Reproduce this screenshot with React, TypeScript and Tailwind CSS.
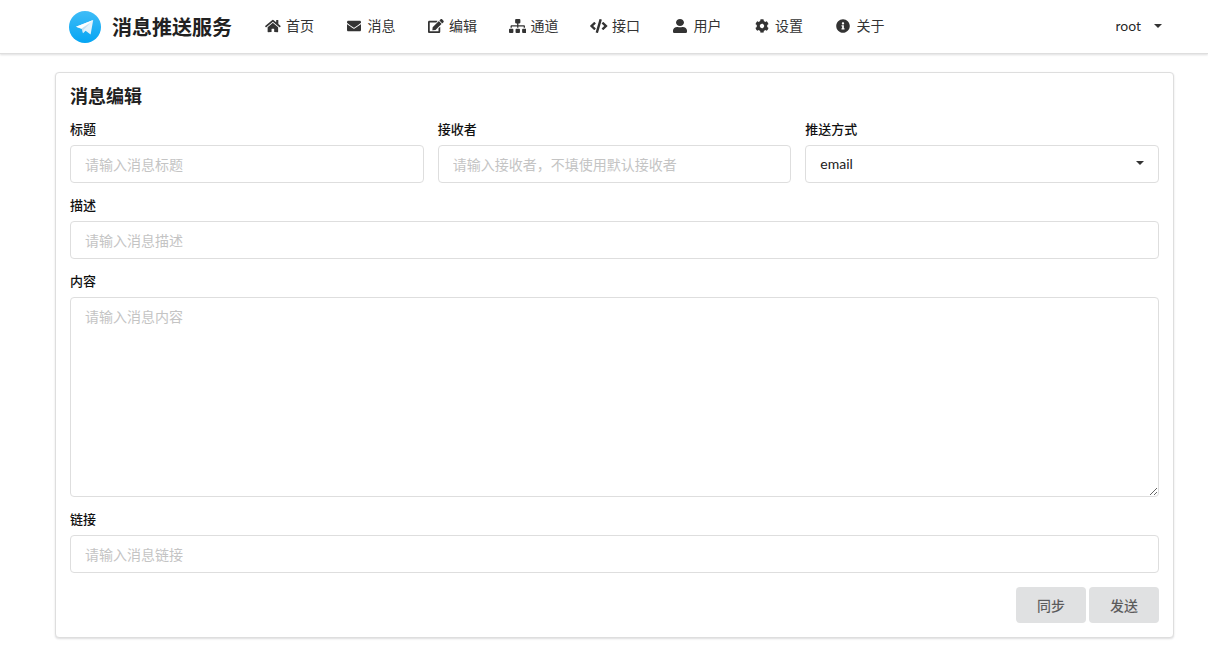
import React from 'react';
import { FaHome, FaEnvelope, FaEdit, FaSitemap, FaCode, FaUser, FaCog, FaInfoCircle } from 'react-icons/fa';

const NAV_ITEMS = [
  { label: '首页', icon: FaHome, size: 'w-[15.75px] h-[14px]' },
  { label: '消息', icon: FaEnvelope, size: 'w-[14px] h-[14px]' },
  { label: '编辑', icon: FaEdit, size: 'w-[15.75px] h-[14px]' },
  { label: '通道', icon: FaSitemap, size: 'w-[17.5px] h-[14px]' },
  { label: '接口', icon: FaCode, size: 'w-[17.5px] h-[14px]' },
  { label: '用户', icon: FaUser, size: 'w-[14px] h-[14px]' },
  { label: '设置', icon: FaCog, size: 'w-[14px] h-[14px]' },
  { label: '关于', icon: FaInfoCircle, size: 'w-[14px] h-[14px]' },
];

const inputClass =
  'block w-full h-[38px] rounded-[4px] border border-[#dedede] bg-white px-[14px] text-[14px] text-[#212121] outline-none placeholder:text-[#c4c4c4]';

const Label: React.FC<{ text: string }> = ({ text }) => (
  <label className="block h-5 mb-1 text-[13px] leading-4 font-medium text-[#111]">{text}</label>
);

const TelegramLogo = () => (
  <svg width="32" height="32" viewBox="0 0 32 32" className="shrink-0">
    <defs>
      <linearGradient id="tg" x1="0" y1="0" x2="0" y2="1">
        <stop offset="0" stopColor="#3fbcf7" />
        <stop offset="1" stopColor="#05a5f3" />
      </linearGradient>
    </defs>
    <circle cx="16" cy="16" r="16" fill="url(#tg)" />
    <path d="M7 15.8 L24.2 9 L21.6 23.4 L16.6 19.7 L14 22.2 L13.4 18.2 Z" fill="#e3f3fc" />
    <path d="M7 15.8 L24.2 9 L12.6 17.6 Z" fill="#ffffff" />
    <path d="M12.6 17.6 L21 12.2 L14.6 18.8 L14 22.2 Z" fill="#c4e1f2" />
  </svg>
);

const Caret = () => <span className="block w-0 h-0 border-x-[4px] border-x-transparent border-t-[4px] border-t-[#333]" />;

export default function App() {
  return (
    <div className="min-h-[651px] bg-white font-['Lato','Noto_Sans_CJK_SC',sans-serif] text-[14px] text-[rgba(0,0,0,0.87)]">
      <nav className="h-[54px] flex items-center pl-[69px] pr-[46px] bg-white border-b border-[#dedede] shadow-[0_1px_2px_rgba(34,36,38,0.15)]">
        <TelegramLogo />
        <span className="ml-[11px] text-[20px] font-bold text-[#212121]">消息推送服务</span>
        <div className="ml-[16.5px] pb-[2px] flex items-center">
          {NAV_ITEMS.map((item) => {
            const Icon = item.icon;
            return (
              <a key={item.label} className="flex items-center px-[16px] text-[14px] text-[#333]">
                <span className="flex justify-center w-[16.5px] mr-[5px]">
                  <Icon className={`shrink-0 ${item.size} text-[#333]`} preserveAspectRatio={item.label === '用户' ? 'none' : undefined} />
                </span>
                {item.label}
              </a>
            );
          })}
        </div>
        <div className="ml-auto pb-[2px] flex items-center gap-[13px] text-[14px]">
          root
          <Caret />
        </div>
      </nav>

      <main className="pt-[18px] pl-[55px]">
        <div className="w-[1119px] h-[566px] rounded-[4px] border border-[#dedede] bg-white shadow-[0_1px_2px_rgba(34,36,38,0.15)] px-[14px] pt-[9px]">
          <h2 className="h-[39px] text-[18px] leading-[28px] font-bold text-[#212121]">消息编辑</h2>
          <form className="flex flex-col gap-[14px]">
            <div className="grid grid-cols-3 gap-[14px]">
              <div>
                <Label text="标题" />
                <input className={inputClass} placeholder="请输入消息标题" />
              </div>
              <div>
                <Label text="接收者" />
                <input className={inputClass} placeholder="请输入接收者，不填使用默认接收者" />
              </div>
              <div>
                <Label text="推送方式" />
                <div className={`${inputClass} flex items-center justify-between pb-[2px]`}>
                  email
                  <Caret />
                </div>
              </div>
            </div>
            <div>
              <Label text="描述" />
              <input className={inputClass} placeholder="请输入消息描述" />
            </div>
            <div>
              <Label text="内容" />
              <textarea
                className="block w-full h-[200px] rounded-[4px] border border-[#dedede] bg-white px-[14px] py-[8px] text-[14px] outline-none resize-y placeholder:text-[#c4c4c4]"
                placeholder="请输入消息内容"
              />
            </div>
            <div>
              <Label text="链接" />
              <input className={inputClass} placeholder="请输入消息链接" />
            </div>
            <div className="flex justify-end gap-[3px]">
              <button type="button" className="w-[70px] h-9 rounded-[4px] bg-[#e0e1e2] text-[14px] font-medium text-[rgba(0,0,0,0.6)]">同步</button>
              <button type="button" className="w-[70px] h-9 rounded-[4px] bg-[#e0e1e2] text-[14px] font-medium text-[rgba(0,0,0,0.6)]">发送</button>
            </div>
          </form>
        </div>
      </main>
    </div>
  );
}
